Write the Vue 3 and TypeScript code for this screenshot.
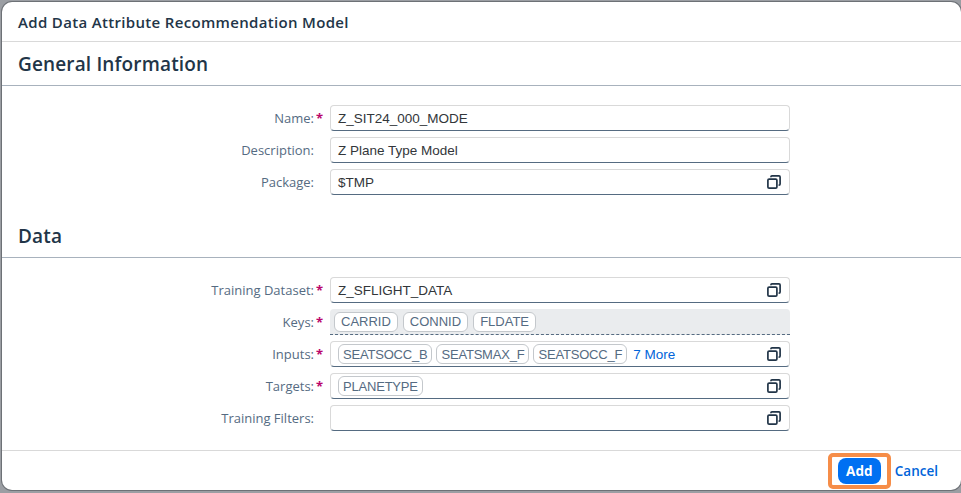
<template>
  <div class="backdrop">
    <div class="dialog">
      <header class="dialog-header">Add Data Attribute Recommendation Model</header>

      <div class="dialog-body">
        <section v-for="section in sections" :key="section.title" class="section">
          <h2 class="section-title">{{ section.title }}</h2>
          <div class="form">
            <template v-for="row in section.rows" :key="row.label">
              <div class="field-label">
                <span class="label-text">{{ row.label }}:</span>
                <span class="required">{{ row.required ? '*' : '' }}</span>
              </div>
              <div :class="['field-input', { 'field-readonly': row.readonly }]">
                <div class="field-content">
                  <span v-if="row.value" class="field-value">{{ row.value }}</span>
                  <span v-for="token in row.tokens" :key="token" class="token">{{ token }}</span>
                  <a v-if="row.more" class="more-link">{{ row.more }}</a>
                </div>
                <svg v-if="row.help" class="help-icon" viewBox="0 0 14 14" aria-hidden="true">
                  <rect x="0.9" y="4.1" width="9" height="9" rx="1.2" />
                  <path d="M3.9 2.2V2a1.1 1.1 0 0 1 1.1-1.1h7a1.1 1.1 0 0 1 1.1 1.1v7a1.1 1.1 0 0 1-1.1 1.1h-.4" />
                </svg>
              </div>
            </template>
          </div>
        </section>
      </div>

      <footer class="dialog-footer">
        <div class="highlight">
          <button class="btn-add" type="button">Add</button>
        </div>
        <button class="btn-cancel" type="button">Cancel</button>
      </footer>
    </div>
  </div>
</template>

<script setup lang="ts">
interface Row {
  label: string
  required?: boolean
  value?: string
  tokens?: string[]
  more?: string
  help?: boolean
  readonly?: boolean
}

interface Section {
  title: string
  rows: Row[]
}

const sections: Section[] = [
  {
    title: 'General Information',
    rows: [
      { label: 'Name', required: true, value: 'Z_SIT24_000_MODE' },
      { label: 'Description', value: 'Z Plane Type Model' },
      { label: 'Package', value: '$TMP', help: true }
    ]
  },
  {
    title: 'Data',
    rows: [
      { label: 'Training Dataset', required: true, value: 'Z_SFLIGHT_DATA', help: true },
      { label: 'Keys', required: true, tokens: ['CARRID', 'CONNID', 'FLDATE'], readonly: true },
      {
        label: 'Inputs',
        required: true,
        tokens: ['SEATSOCC_B', 'SEATSMAX_F', 'SEATSOCC_F'],
        more: '7 More',
        help: true
      },
      { label: 'Targets', required: true, tokens: ['PLANETYPE'], help: true },
      { label: 'Training Filters', help: true }
    ]
  }
]
</script>

<style>
html,
body {
  margin: 0;
  background: #9b9ea3;
}
</style>

<style scoped>
.backdrop {
  width: 961px;
  height: 493px;
  box-sizing: border-box;
  padding: 2px 0 3px 2px;
  overflow: hidden;
  font-family: "Open Sans", "Noto Sans", sans-serif;
  color: #32363a;
}

.dialog {
  height: 100%;
  display: flex;
  flex-direction: column;
  background: #fff;
  border-radius: 10px;
  box-shadow: 0 0 0 1px #6d7176;
}

.dialog-header {
  height: 40px;
  flex: none;
  box-sizing: border-box;
  display: flex;
  align-items: center;
  padding-left: 16px;
  border-bottom: 1px solid #d9d9d9;
  font-size: 15px;
  font-weight: 600;
  letter-spacing: 0.33px;
  color: #223548;
}

.dialog-body {
  flex: 1;
  min-height: 0;
}

.section {
  padding-bottom: 19px;
}

.section-title {
  height: 44px;
  box-sizing: border-box;
  margin: 0;
  display: flex;
  align-items: center;
  padding-left: 16px;
  border-bottom: 1px solid #a8b2bd;
  font-size: 19px;
  font-weight: 600;
  letter-spacing: 0.15px;
  color: #223548;
}

.form {
  display: grid;
  grid-template-columns: 312px 460px;
  grid-auto-rows: 26px;
  row-gap: 6px;
  column-gap: 16px;
  padding-top: 19px;
}

.field-label {
  display: flex;
  align-items: center;
  justify-content: flex-end;
  font-size: 13px;
  color: #556b82;
}

.required {
  width: 8px;
  margin-left: 2px;
  margin-right: -10px;
  font-weight: 700;
  color: #ba066c;
}

.field-input {
  display: flex;
  align-items: center;
  box-sizing: border-box;
  border: 1px solid #d9d9d9;
  border-bottom-color: #556b81;
  border-radius: 4px;
  background: #fff;
}

.field-readonly {
  border: none;
  border-bottom: 1px dashed #556b81;
  background: #eaecee;
  border-radius: 4px 4px 0 0;
}

.field-content {
  flex: 1;
  display: flex;
  align-items: center;
  gap: 4px;
  padding-left: 7px;
  min-width: 0;
  font-family: "Liberation Sans", Arial, sans-serif;
  font-size: 13px;
}

.field-value {
  font-size: 13.5px;
  color: #32363a;
}

.token {
  height: 20px;
  box-sizing: border-box;
  display: flex;
  align-items: center;
  padding: 0 4px;
  border: 1px solid #c4c8cc;
  border-radius: 6px;
  background: #fff;
  color: #556b82;
  letter-spacing: -0.2px;
  white-space: nowrap;
}

.field-readonly .field-content {
  gap: 5px;
  padding-left: 4px;
}

.field-readonly .token {
  padding: 0 6px;
  letter-spacing: 0;
}

.more-link {
  margin-left: 2px;
  font-size: 13.5px;
  color: #0064d9;
}

.help-icon {
  width: 14px;
  height: 14px;
  flex: none;
  margin-right: 8px;
  fill: none;
  stroke: #223548;
  stroke-width: 1.7;
}

.dialog-footer {
  height: 40px;
  flex: none;
  box-sizing: border-box;
  display: flex;
  align-items: center;
  justify-content: flex-end;
  gap: 4px;
  padding-right: 23px;
  border-top: 1px solid #d9d9d9;
}

.highlight {
  width: 63px;
  height: 36px;
  box-sizing: border-box;
  display: flex;
  align-items: center;
  justify-content: center;
  border: 4px solid #f68d48;
  border-radius: 5px;
}

.btn-add {
  width: 43px;
  height: 26px;
  padding: 0;
  border: none;
  border-radius: 8px;
  background: #0070f2;
  color: #fff;
  font-family: inherit;
  font-size: 13.5px;
  font-weight: 700;
}

.btn-cancel {
  padding: 0;
  border: none;
  background: none;
  color: #0064d9;
  font-family: inherit;
  font-size: 13.5px;
  font-weight: 600;
}
</style>
